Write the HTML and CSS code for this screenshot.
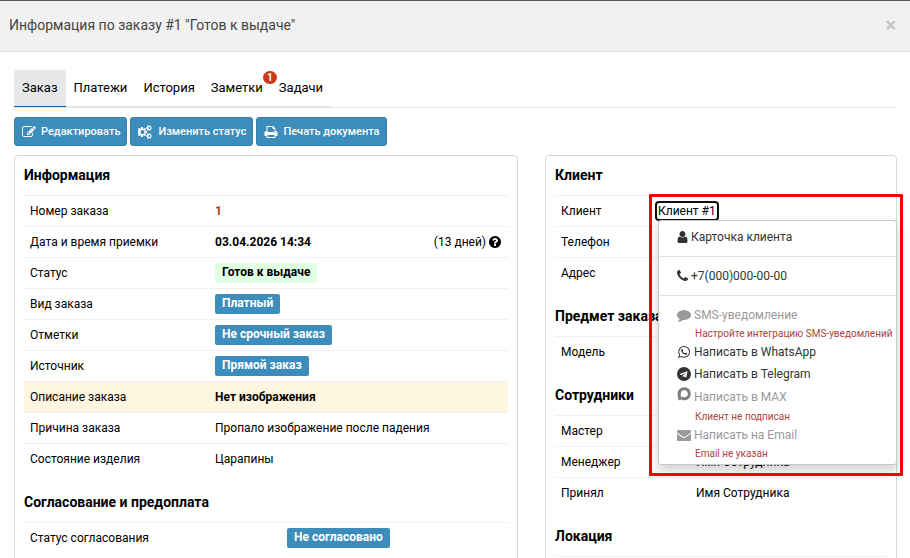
FILE: index.html
```html
<!DOCTYPE html>
<html lang="ru">
<head>
<meta charset="utf-8">
<meta name="viewport" content="width=device-width, initial-scale=1">
<title>Информация по заказу #1</title>
<link rel="stylesheet" href="styles.css">
</head>
<body>
<header class="modal-header">
  <h1 class="modal-title">Информация по заказу #1 "Готов к выдаче"</h1>
  <button class="close" type="button" aria-label="Закрыть">×</button>
</header>
<main class="modal-body">
  <nav class="tabs">
    <div class="tab-list">
      <a class="tab active" href="#order">Заказ</a>
      <a class="tab" href="#payments">Платежи</a>
      <a class="tab" href="#history">История</a>
      <a class="tab" href="#notes">Заметки<span class="badge">1</span></a>
      <a class="tab" href="#tasks">Задачи</a>
    </div>
  </nav>
  <div class="toolbar">
    <button class="btn" type="button"><svg class="icon" viewBox="0 0 1792 1792" aria-hidden="true"><path d="M888 1184l116-116-152-152-116 116v56h96v96h56zm440-720q-16-16-33 1l-350 350q-17 17-1 33t33-1l350-350q17-17 1-33zm80 594v190q0 119-84.5 203.5t-203.5 84.5h-832q-119 0-203.5-84.5t-84.5-203.5v-832q0-119 84.5-203.5t203.5-84.5h832q63 0 117 25 15 7 18 23 3 17-9 29l-49 49q-14 14-32 8-23-6-45-6h-832q-66 0-113 47t-47 113v832q0 66 47 113t113 47h832q66 0 113-47t47-113v-126q0-13 9-22l64-64q15-15 35-7t20 29zm-96-738l288 288-672 672h-288v-288zm444 132l-92 92-288-288 92-92q28-28 68-28t68 28l152 152q28 28 28 68t-28 68z"/></svg>Редактировать</button>
    <button class="btn" type="button"><svg class="icon wide" viewBox="0 0 1920 1792" aria-hidden="true"><path d="M832 896q0-106-75-181t-181-75-181 75-75 181 75 181 181 75 181-75 75-181zm768 512q0-52-38-90t-90-38-90 38-38 90q0 53 37.5 90.5t90.5 37.5 90.5-37.5 37.5-90.5zm0-1024q0-52-38-90t-90-38-90 38-38 90q0 53 37.5 90.5t90.5 37.5 90.5-37.5 37.5-90.5zm-448 421v185q0 10-7 19.5t-16 10.5l-155 24q-11 35-32 76 34 48 90 115 7 11 7 20 0 12-7 19-23 30-82.5 89.5t-78.5 59.5q-11 0-21-7l-115-90q-37 19-77 31-11 108-23 155-7 24-30 24h-186q-11 0-20-7.5t-10-17.5l-23-153q-34-10-75-31l-118 89q-7 7-20 7-11 0-21-8-144-133-144-160 0-9 7-19 10-14 41-53t47-61q-23-44-35-82l-152-24q-10-1-17-9.5t-7-19.5v-185q0-10 7-19.5t16-10.5l155-24q11-35 32-76-34-48-90-115-7-11-7-20 0-12 7-20 22-30 82-89t79-59q11 0 21 7l115 90q34-18 77-32 11-108 23-154 7-24 30-24h186q11 0 20 7.5t10 17.5l23 153q34 10 75 31l118-89q8-7 20-7 11 0 21 8 144 133 144 160 0 8-7 19-12 16-42 54t-45 60q23 48 34 82l152 23q10 2 17 10.5t7 19.5zm640 533v140q0 16-149 31-12 27-30 52 51 113 51 138 0 4-4 7-122 71-124 71-8 0-46-47t-52-68q-20 2-30 2t-30-2q-14 21-52 68t-46 47q-2 0-124-71-4-3-4-7 0-25 51-138-18-25-30-52-149-15-149-31v-140q0-16 149-31 13-29 30-52-51-113-51-138 0-4 4-7 4-2 35-20t59-34 30-16q8 0 46 46.5t52 67.5q20-2 30-2t30 2q51-71 92-112l6-2q4 0 124 70 4 3 4 7 0 25-51 138 17 23 30 52 149 15 149 31zm0-1024v140q0 16-149 31-12 27-30 52 51 113 51 138 0 4-4 7-122 71-124 71-8 0-46-47t-52-68q-20 2-30 2t-30-2q-14 21-52 68t-46 47q-2 0-124-71-4-3-4-7 0-25 51-138-18-25-30-52-149-15-149-31v-140q0-16 149-31 13-29 30-52-51-113-51-138 0-4 4-7 4-2 35-20t59-34 30-16q8 0 46 46.500t52 67.500q20-2 30-2t30 2q51-71 92-112l6-2q4 0 124 70 4 3 4 7 0 25-51 138 17 23 30 52 149 15 149 31z"/></svg>Изменить статус</button>
    <button class="btn" type="button"><svg class="icon" viewBox="0 0 1792 1792" aria-hidden="true"><path d="M448 1536h896v-256h-896v256zm0-640h896v-384h-160q-40 0-68-28t-28-68v-160h-640v640zm1152 64q0-26-19-45t-45-19-45 19-19 45 19 45 45 19 45-19 19-45zm128 0v416q0 13-9.500 22.500t-22.500 9.500h-224v160q0 40-28 68t-68 28h-960q-40 0-68-28t-28-68v-160h-224q-13 0-22.500-9.500t-9.500-22.500v-416q0-79 56.500-135.500t135.500-56.500h64v-544q0-40 28-68t68-28h672q40 0 88 20t76 48l152 152q28 28 48 76t20 88v256h64q79 0 135.500 56.500t56.500 135.500z"/></svg>Печать документа</button>
  </div>
  <div class="columns">
    <section class="panel">
      <h2>Информация</h2>
      <table class="details">
        <tr><th>Номер заказа</th><td class="number">1</td></tr>
        <tr><th>Дата и время приемки</th><td><div class="split"><b>03.04.2026 14:34</b><span class="age">(13 дней) <svg class="icon help" viewBox="128 128 1536 1536" aria-hidden="true"><path d="M1024 1376v-192q0-14-9-23t-23-9h-192q-14 0-23 9t-9 23v192q0 14 9 23t23 9h192q14 0 23-9t9-23zm256-672q0-88-55.5-163t-138.5-116-170-41q-243 0-371 213-15 24 8 42l132 100q7 6 19 6 16 0 25-12 53-68 86-92 34-24 86-24 48 0 85.5 26t37.5 59q0 38-20 61t-68 45q-63 28-115.5 86.5t-52.5 125.5v36q0 14 9 23t23 9h192q14 0 23-9t9-23q0-19 21.5-49.5t54.5-49.5q32-18 49-28.5t46-35 44.5-48 28-60.5 12.5-81zm384 192q0 209-103 385.5t-279.5 279.5-385.5 103-385.5-103-279.5-279.5-103-385.5 103-385.5 279.5-279.5 385.5-103 385.5 103 279.5 279.5 103 385.5z"/></svg></span></div></td></tr>
        <tr><th>Статус</th><td><span class="label ready">Готов к выдаче</span></td></tr>
        <tr><th>Вид заказа</th><td><span class="label">Платный</span></td></tr>
        <tr><th>Отметки</th><td><span class="label">Не срочный заказ</span></td></tr>
        <tr><th>Источник</th><td><span class="label">Прямой заказ</span></td></tr>
        <tr class="highlight"><th>Описание заказа</th><td><b>Нет изображения</b></td></tr>
        <tr><th>Причина заказа</th><td>Пропало изображение после падения</td></tr>
        <tr><th>Состояние изделия</th><td>Царапины</td></tr>
      </table>
      <h2>Согласование и предоплата</h2>
      <table class="details approval">
        <tr><th>Статус согласования</th><td><span class="label">Не согласовано</span></td></tr>
      </table>
    </section>
    <section class="panel side">
      <h2>Клиент</h2>
      <table class="details client">
        <tr><th>Клиент</th><td>
          <div class="dropdown">
            <button class="toggle" type="button" aria-haspopup="true" aria-expanded="true">Клиент #1</button>
            <ul class="menu">
              <li><a class="item" href="#card"><svg class="icon small" viewBox="256 128 1280 1536" aria-hidden="true"><path d="M1536 1399q0 109-62.5 187t-150.5 78h-854q-88 0-150.5-78t-62.5-187q0-85 8.5-160.5t31.5-152 58.5-131 94-89 134.5-34.5q131 128 313 128t313-128q76 0 134.500 34.500t94 89 58.500 131 31.500 152 8.500 160.500zm-256-887q0 159-112.500 271.500t-271.500 112.500-271.500-112.500-112.500-271.500 112.500-271.500 271.500-112.500 271.500 112.500 112.500 271.500z"/></svg>Карточка клиента</a></li>
              <li class="divided"><a class="item" href="tel:+70000000000"><svg class="icon small" viewBox="192 192 1408 1408" aria-hidden="true"><path d="M1600 1240q0 27-10 70.5t-21 68.5q-21 50-122 106-94 51-186 51-27 0-53-3.5t-57.5-12.5-47-14.5-55.5-20.5-49-18q-98-35-175-83-127-79-264-216t-216-264q-48-77-83-175-3-9-18-49t-20.5-55.5-14.5-47-12.5-57.5-3.5-53q0-92 51-186 56-101 106-122 25-11 68.5-21t70.5-10q14 0 21 3 18 6 53 76 11 19 30 54t35 63.5 31 53.5q3 4 17.5 25t21.5 35.5 7 28.5q0 20-28.5 50t-62 55-62 53-28.5 46q0 9 5 22.5t8.5 20.5 14 24 11.5 19q76 137 174 235t235 174q2 1 19 11.5t24 14 20.5 8.5 22.5 5q18 0 46-28.5t53-62 55-62 50-28.5q14 0 28.5 7t35.5 21.5 25 17.5q25 15 53.5 31t63.5 35 54 30q70 35 76 53 3 7 3 21z"/></svg>+7(000)000-00-00</a></li>
              <li class="divided"><a class="item disabled"><svg class="icon" viewBox="0 0 1792 1792" aria-hidden="true"><path d="M1792 896q0 174-120 321.5t-326 233-450 85.5q-70 0-145-8-198 175-460 242-49 14-114 22-17 2-30.5-9t-17.5-29v-1q-3-4-.5-12t2-10 4.5-9.500l6-9 7-8.500 8-9q7-8 31-34.500t34.500-38 31-39.500 32.500-51 27-59 26-76q-157-89-247.500-220t-90.500-281q0-130 71-248.500t191-204.500 286-136.500 348-50.500q244 0 450 85.500t326 233 120 321.500z"/></svg>SMS-уведомление</a><small>Настройте интеграцию SMS-уведомлений</small></li>
              <li><a class="item" href="#whatsapp"><svg class="icon" viewBox="0 0 1792 1792" aria-hidden="true"><path d="M1113 974q13 0 97.5 44t89.5 53q2 5 2 15 0 33-17 76-16 39-71 65.5t-102 26.5q-57 0-190-62-98-45-170-118t-148-185q-72-107-71-194v-8q3-91 74-158 24-22 52-22 6 0 18 1.5t19 1.5q19 0 26.5 6.5t15.5 27.5q8 20 33 88t25 75q0 21-34.5 57.5t-34.5 46.5q0 7 5 15 34 73 102 137 56 53 151 101 12 7 22 7 15 0 54-48.5t52-48.500zm-203 530q127 0 243.500-50t200.500-134 134-200.500 50-243.500-50-243.500-134-200.500-200.500-134-243.500-50-243.500 50-200.500 134-134 200.500-50 243.500q0 203 120 368l-79 233 242-77q158 104 345 104zm0-1382q153 0 292.500 60t240.500 161 161 240.500 60 292.500-60 292.500-161 240.500-240.500 161-292.500 60q-195 0-365-94l-417 134 136-405q-108-178-108-389 0-153 60-292.500t161-240.500 240.500-161 292.500-60z"/></svg>Написать в WhatsApp</a></li>
              <li><a class="item" href="#telegram"><svg class="icon" viewBox="0 0 1792 1792" aria-hidden="true"><path fill-rule="evenodd" d="M896 0a896 896 0 1 1 0 1792a896 896 0 1 1 0-1792zM1189 1307l147-693q9-44-10.5-63t-51.5-7l-864 333q-29 11-39.5 25t-2.500 26.500 32 19.500l221 69 513-323q21-14 32-6 7 5-4 15l-415 375-16 228q23 0 45-22l108-104 224 165q64 36 81-38z"/></svg>Написать в Telegram</a></li>
              <li><a class="item disabled max"><svg class="icon" viewBox="0 0 14 14" aria-hidden="true"><path fill-rule="evenodd" d="M7.300.2c3.800 0 6.500 2.700 6.500 6.500s-2.700 6.600-6.500 6.600c-1.300 0-2-.3-3-1-.8.9-2.500 1.500-2.800.6C1 11.700.6 9.200.6 7 .6 3.100 3.300.2 7.300.2zM7.300 3.200C5.200 3.200 3.900 4.700 3.800 6.500c-.1 1.400.2 3.500.7 3.700.3.100.8-.3 1-.5.6.4 1.100.6 1.800.6 2 0 3.500-1.500 3.500-3.500s-1.500-3.600-3.500-3.600z"/></svg>Написать в MAX</a><small>Клиент не подписан</small></li>
              <li><a class="item disabled"><svg class="icon" viewBox="0 0 1792 1792" aria-hidden="true"><path d="M1792 710v794q0 66-47 113t-113 47h-1472q-66 0-113-47t-47-113v-794q44 49 101 87 362 246 497 345 57 42 92.500 65.500t94.500 48 110 24.500h2q51 0 110-24.500t94.500-48 92.500-65.500q170-123 498-345 57-39 100-87zm0-294q0 79-49 151t-122 123q-376 261-468 325-10 7-42.500 31t-54 38.500-52 32.500-57.500 27-50 9h-2q-23 0-50-9t-57.500-27-52-32.500-54-38.500-42.500-31q-91-64-262-182.500t-205-142.500q-62-42-117-115.500t-55-136.500q0-78 41.500-130t118.500-52h1472q65 0 112.500 47t47.500 113z"/></svg>Написать на Email</a><small>Email не указан</small></li>
            </ul>
          </div>
        </td></tr>
        <tr><th>Телефон</th><td></td></tr>
        <tr><th>Адрес</th><td></td></tr>
      </table>
      <h2>Предмет заказа</h2>
      <table class="details staff">
        <tr><th>Модель</th><td></td></tr>
      </table>
      <h2>Сотрудники</h2>
      <table class="details staff">
        <tr><th>Мастер</th><td></td></tr>
        <tr><th>Менеджер</th><td>Имя Сотрудника</td></tr>
        <tr><th>Принял</th><td>Имя Сотрудника</td></tr>
      </table>
      <h2>Локация</h2>
      <table class="details staff">
        <tr><th></th><td></td></tr>
      </table>
      <div class="callout"></div>
    </section>
  </div>
</main>
</body>
</html>
```
FILE: styles.css
```css
* {
  box-sizing: border-box;
}

html {
  overflow: hidden;
}

body {
  margin: 0;
  font-family: Roboto, "Liberation Sans", sans-serif;
  font-size: 12px;
  line-height: 18px;
  color: #000;
  background: #fff;
}

.modal-header {
  display: flex;
  align-items: center;
  justify-content: space-between;
  height: 52px;
  padding: 0 14px 2px 9px;
  background: #f1f1f1;
  border-top: 1px solid #555;
  border-bottom: 1px solid #e0e0e0;
}

.modal-title {
  margin: 0;
  font-size: 14px;
  font-weight: 400;
  color: #444;
}

.close {
  padding: 0;
  border: 0;
  background: none;
  font: 700 20px/18px Roboto, sans-serif;
  color: #c4c4c4;
}

.modal-body {
  padding: 18px 13px 0 14px;
}

.tabs {
  border-bottom: 1px solid #e5e5e5;
}

.tab-list {
  display: flex;
  width: max-content;
  border-bottom: 1px solid #e5e5e5;
}

.tab {
  position: relative;
  padding: 9px 8px 8px;
  border-bottom: 1px solid transparent;
  font-size: 13px;
  color: #000;
  text-decoration: none;
}

.tab.active {
  margin-bottom: -1px;
  background: #e7e7e7;
  border-bottom-color: #0b62a4;
  border-radius: 3px 3px 0 0;
}

.badge {
  position: absolute;
  top: 1px;
  right: -6px;
  width: 14px;
  height: 13px;
  border-radius: 7px;
  background: #cc3b18;
  font-size: 10px;
  font-weight: 700;
  line-height: 13px;
  text-align: center;
  color: #fff;
}

.toolbar {
  display: flex;
  gap: 3px;
  margin: 9px 0;
}

.btn {
  display: flex;
  align-items: center;
  gap: 5px;
  height: 29px;
  padding: 0 6px 0 7px;
  border: 1px solid #367fa9;
  border-radius: 3px;
  background: #3c8dbc;
  font: 500 11px/18px Roboto, sans-serif;
  color: #fff;
}

.icon {
  flex: none;
  width: 14px;
  height: 14px;
  fill: currentColor;
}

.icon.wide {
  width: 15px;
}

.icon.help {
  width: 12px;
  height: 12px;
  vertical-align: -2px;
}

.columns {
  display: grid;
  grid-template-columns: 504fr 352fr;
  gap: 27px;
}

.panel {
  position: relative;
  padding: 0 9px;
  border: 1px solid #d2d6de;
  border-radius: 4px;
}

h2 {
  margin: 0;
  padding: 19px 0 11px;
  font-size: 14px;
  font-weight: 700;
  line-height: 18px;
}

h2:first-child {
  padding-top: 10px;
}

.details {
  width: 100%;
  table-layout: fixed;
  border-spacing: 0;
}

.details th,
.details td {
  height: 31px;
  padding: 0 7px 0 0;
  border-top: 1px solid #f1f1f1;
  font-weight: 400;
  text-align: left;
}

.details th {
  width: 191px;
  padding-left: 6px;
}

.approval th {
  width: 263px;
}

.client th {
  width: 101px;
}

.staff th {
  width: 141px;
}

.details .number {
  font-weight: 700;
  color: #c0391b;
}

.highlight {
  background: #fff6e2;
}

.split {
  display: flex;
  justify-content: space-between;
}

.label {
  display: block;
  width: max-content;
  padding: 0 7px 2px;
  border-radius: 2px;
  background: #3c8dbc;
  font-weight: 700;
  color: #fff;
}

.label.ready {
  background: #e3ffe3;
  color: #000;
}

.dropdown {
  position: relative;
}

.toggle {
  display: block;
  padding: 0 2px;
  border: 0;
  border-radius: 3px;
  outline: 2px solid #101010;
  outline-offset: -1px;
  background: #fff;
  font: 400 12px/18px Roboto, sans-serif;
  color: #000;
}

.menu {
  position: absolute;
  z-index: 1;
  top: 18px;
  left: 2px;
  width: 239px;
  margin: 0;
  padding: 5px 0 3px;
  border: 1px solid #c8c8c8;
  border-radius: 3px;
  background: #fff;
  box-shadow: 0 6px 12px rgba(0, 0, 0, 0.18);
  list-style: none;
}

.divided {
  margin-top: 8px;
  padding-top: 8px;
  border-top: 1px solid #e2e2e2;
}

.item {
  display: flex;
  align-items: center;
  gap: 3px;
  height: 22px;
  padding-left: 18px;
  color: #333;
  text-decoration: none;
}

.item.disabled {
  color: #999;
}

.icon.small {
  width: 11px;
  height: 12px;
}

.item.max {
  height: 24px;
}

.item.max .icon {
  align-self: flex-start;
  margin-top: 2px;
  fill: #808080;
}

.menu small {
  display: block;
  padding-left: 36px;
  font-size: 10px;
  line-height: 15px;
  color: #a94442;
}

.callout {
  position: absolute;
  z-index: 2;
  top: 38px;
  right: -7px;
  width: 254px;
  height: 282px;
  border: 3px solid #f00;
  border-radius: 1px;
  pointer-events: none;
}
```
